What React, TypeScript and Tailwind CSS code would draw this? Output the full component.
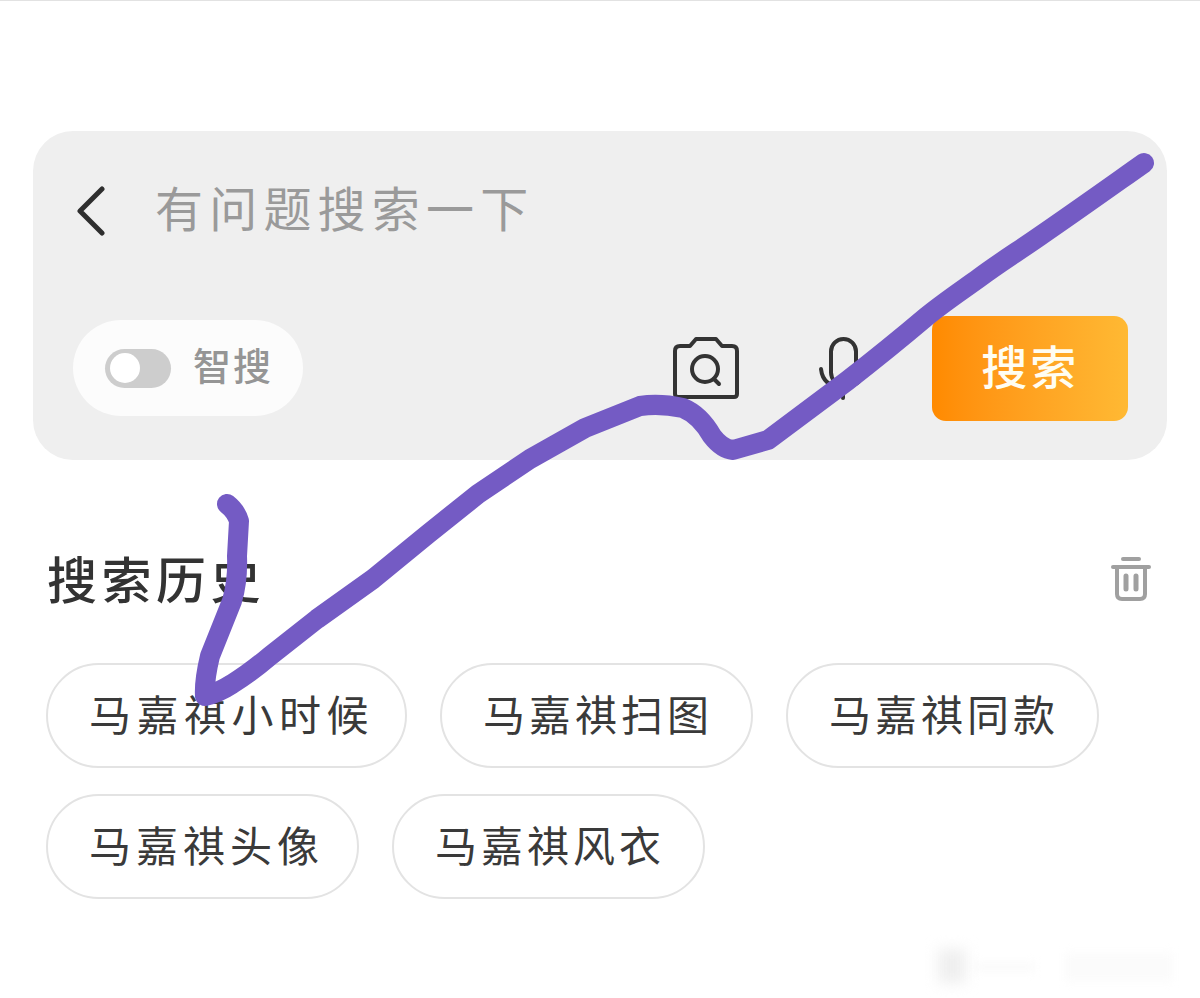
const font = { fontFamily: '"Noto Sans CJK SC", "Liberation Sans", sans-serif' };

function Chip({ text, width, tracking }: { text: string; width: string; tracking: string }) {
  return (
    <div className={`flex h-[105px] items-center rounded-full border-2 border-[#e3e3e3] bg-white pb-[5px] pl-[41px] text-[42px] leading-none whitespace-nowrap text-[#3a3a3a] ${width} ${tracking}`}>
      {text}
    </div>
  );
}

export default function App() {
  return (
    <div className="relative h-[998px] w-[1200px] overflow-hidden border-t border-[#e2e2e2] bg-white" style={font}>
      <div className="px-[33px] pt-[130px]">
        <section className="flex h-[329px] flex-col rounded-[40px] bg-[#efefef] pl-[40px] pr-[39px]">
          <div className="flex h-[185px] shrink-0 items-start pt-[47px]">
            <svg width="36" height="52" viewBox="0 0 36 52" className="mt-[6px] shrink-0" fill="none" stroke="#2e2e2e" strokeWidth="5" strokeLinecap="round" strokeLinejoin="round">
              <path d="M29 5 L7 27 L29 49" />
            </svg>
            <span className="ml-[46px] text-[48px] leading-[56px] tracking-[6.2px] text-[#9a9a9a]">有问题搜索一下</span>
          </div>
          <div className="flex items-start">
            <div className="mt-[4px] flex h-[96px] w-[232px] items-center rounded-full bg-[#fcfcfc] pl-[32px]">
              <div className="flex h-[39px] w-[66px] items-center rounded-full bg-[#cdcdcd] pl-[5px]">
                <div className="h-[30px] w-[30px] rounded-full bg-white" />
              </div>
              <span className="ml-[22px] pb-[8px] text-[38px] leading-none font-medium tracking-[2px] text-[#959595]">智搜</span>
            </div>
            <svg width="68" height="64" viewBox="0 0 68 64" className="ml-[369px] mt-[20px] shrink-0" fill="none" stroke="#333" strokeWidth="4" strokeLinecap="round" strokeLinejoin="round">
              <path d="M8 10 H18 L24 3 H44 L50 10 H60 Q65 10 65 15 V58 Q65 61 62 61 H6 Q3 61 3 58 V15 Q3 10 8 10 Z" />
              <circle cx="33" cy="33" r="13" />
              <path d="M42 43 L47 48" />
            </svg>
            <svg width="50" height="64" viewBox="0 0 50 64" className="ml-[78px] mt-[20px] shrink-0" fill="none" stroke="#333" strokeWidth="4" strokeLinecap="round" strokeLinejoin="round">
              <rect x="13" y="3" width="25" height="46" rx="12.5" />
              <path d="M3 33 Q5 51 25 51 Q44 51 47 33" />
              <path d="M25 51 V62" />
            </svg>
            <button className="ml-[64px] flex h-[105px] w-[197px] items-center justify-center rounded-[14px] bg-gradient-to-r from-[#ff8a00] to-[#ffb933] pb-[10px] text-[46px] leading-none font-medium tracking-[3px] text-[#fffdf2]" style={font}>
              搜索
            </button>
          </div>
        </section>
      </div>

      <div className="px-[46px]">
        <div className="mt-[89px] flex h-[60px] items-center justify-between pr-[2px]">
          <h2 className="pb-[4px] pl-[1px] text-[50px] leading-none font-medium tracking-[4.5px] text-[#333]">搜索历史</h2>
          <svg width="42" height="46" viewBox="0 0 42 46" fill="none" stroke="#a0a0a0" strokeWidth="4" strokeLinecap="round" strokeLinejoin="round">
            <path d="M13 3 H29" />
            <path d="M3 11 H39" />
            <path d="M7 11 V38 Q7 43 12 43 H30 Q35 43 35 38 V11" />
            <path d="M16 20 V33 M26 20 V33" strokeWidth="5" />
          </svg>
        </div>
        <div className="mt-[54px] flex w-[1080px] flex-wrap gap-x-[33px] gap-y-[26px]">
          <Chip text="马嘉祺小时候" width="w-[361px]" tracking="tracking-[5.5px]" />
          <Chip text="马嘉祺扫图" width="w-[313px]" tracking="tracking-[4px]" />
          <Chip text="马嘉祺同款" width="w-[313px]" tracking="tracking-[4px]" />
          <Chip text="马嘉祺头像" width="w-[313px]" tracking="tracking-[5px]" />
          <Chip text="马嘉祺风衣" width="w-[313px]" tracking="tracking-[4px]" />
        </div>
      </div>

      <svg width="1200" height="998" viewBox="0 0 1200 998" className="pointer-events-none absolute top-0 left-0" fill="none" stroke="#745bc4" strokeWidth="20" strokeLinecap="round" strokeLinejoin="round">
        <path d="M1144 162 C1110 186 1075 211 1040 235 C1020 249 999 262 979 277 C961 290 943 302 926 316 C900 338 874 359 847 380 L768 439 L733 449 Q722 448 712 435 Q700 414 683 407 Q660 402 640 405 L585 427 L530 458 L478 493 L428 533 L373 578 L317 618 L270 655 Q250 672 232 683 Q218 692 205 695 Q204 680 210 655 L232 600 Q238 580 237 555 L239 520 Q236 510 227 503" />
      </svg>

      <div className="pointer-events-none absolute top-[948px] left-[938px] h-[34px] w-[28px] bg-[#efefef] blur-[7px]" />
      <div className="pointer-events-none absolute top-[962px] left-[975px] h-[8px] w-[60px] bg-[#fafafa] blur-[4px]" />
      <div className="pointer-events-none absolute top-[952px] left-[1065px] h-[28px] w-[108px] bg-[#fbfbfb] blur-[4px]" />
    </div>
  );
}
